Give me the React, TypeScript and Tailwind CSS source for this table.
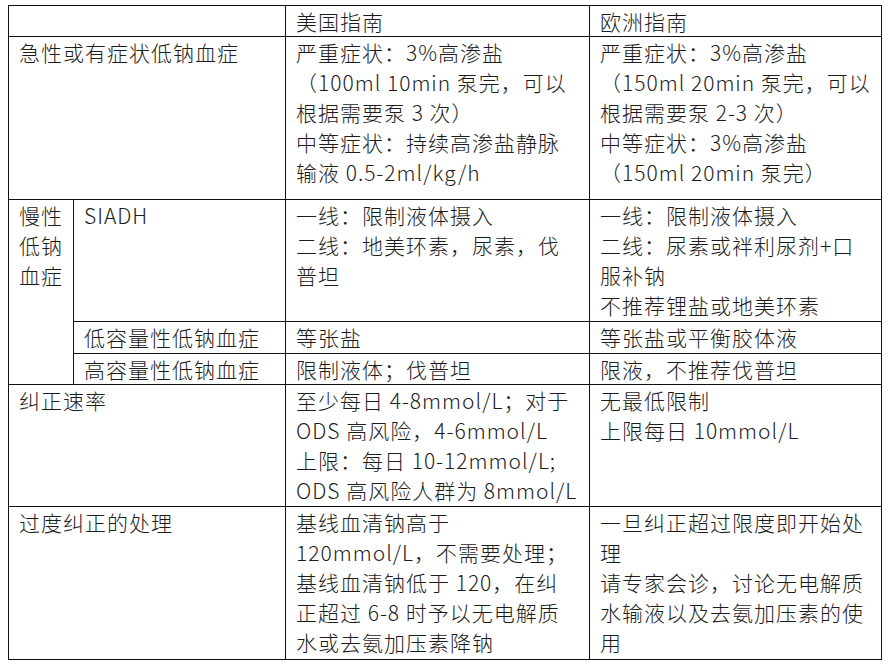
import React from "react";

type Cell = string[];

const Lines = ({ lines }: { lines: Cell }) => (
  <>
    {lines.map((l, i) => (
      <div key={i} className="whitespace-nowrap">
        {l}
      </div>
    ))}
  </>
);

const td = "border border-[#111] align-top pl-[10px] pr-1 pt-0 pb-0";

const App = () => {
  return (
    <div
      className="w-[890px] h-[669px] bg-white text-[#1c1c1c] text-[21px] font-light tracking-[1px] leading-[30px] pt-[5px] pl-[8px]"
      style={{ fontFamily: '"Noto Sans CJK SC", "Noto Sans", sans-serif' }}
    >
      <table className="border-collapse table-fixed w-[873px]">
        <colgroup>
          <col className="w-[65px]" />
          <col className="w-[212px]" />
          <col className="w-[304px]" />
          <col className="w-[292px]" />
        </colgroup>
        <tbody>
          <tr className="h-[31px]">
            <td className={td} colSpan={2}></td>
            <td className={td}>美国指南</td>
            <td className={td}>欧洲指南</td>
          </tr>
          <tr className="h-[163px]">
            <td className={td} colSpan={2}>
              急性或有症状低钠血症
            </td>
            <td className={td}>
              <Lines
                lines={[
                  "严重症状：3%高渗盐",
                  "（100ml 10min 泵完，可以",
                  "根据需要泵 3 次）",
                  "中等症状：持续高渗盐静脉",
                  "输液 0.5-2ml/kg/h",
                ]}
              />
            </td>
            <td className={td}>
              <Lines
                lines={[
                  "严重症状：3%高渗盐",
                  "（150ml 20min 泵完，可以",
                  "根据需要泵 2-3 次）",
                  "中等症状：3%高渗盐",
                  "（150ml 20min 泵完）",
                ]}
              />
            </td>
          </tr>
          <tr className="h-[122px]">
            <td className={td} rowSpan={3}>
              <Lines lines={["慢性", "低钠", "血症"]} />
            </td>
            <td className={td}>SIADH</td>
            <td className={td}>
              <Lines lines={["一线：限制液体摄入", "二线：地美环素，尿素，伐", "普坦"]} />
            </td>
            <td className={td}>
              <Lines
                lines={["一线：限制液体摄入", "二线：尿素或袢利尿剂+口", "服补钠", "不推荐锂盐或地美环素"]}
              />
            </td>
          </tr>
          <tr className="h-[32px]">
            <td className={td}>低容量性低钠血症</td>
            <td className={td}>等张盐</td>
            <td className={td}>等张盐或平衡胶体液</td>
          </tr>
          <tr className="h-[31px]">
            <td className={td}>高容量性低钠血症</td>
            <td className={td}>限制液体；伐普坦</td>
            <td className={td}>限液，不推荐伐普坦</td>
          </tr>
          <tr className="h-[122px]">
            <td className={td} colSpan={2}>
              纠正速率
            </td>
            <td className={td}>
              <Lines
                lines={[
                  "至少每日 4-8mmol/L；对于",
                  "ODS 高风险，4-6mmol/L",
                  "上限：每日 10-12mmol/L;",
                  "ODS 高风险人群为 8mmol/L",
                ]}
              />
            </td>
            <td className={td}>
              <Lines lines={["无最低限制", "上限每日 10mmol/L"]} />
            </td>
          </tr>
          <tr className="h-[153px]">
            <td className={td} colSpan={2}>
              过度纠正的处理
            </td>
            <td className={td}>
              <Lines
                lines={[
                  "基线血清钠高于",
                  "120mmol/L，不需要处理；",
                  "基线血清钠低于 120，在纠",
                  "正超过 6-8 时予以无电解质",
                  "水或去氨加压素降钠",
                ]}
              />
            </td>
            <td className={td}>
              <Lines
                lines={[
                  "一旦纠正超过限度即开始处",
                  "理",
                  "请专家会诊，讨论无电解质",
                  "水输液以及去氨加压素的使",
                  "用",
                ]}
              />
            </td>
          </tr>
        </tbody>
      </table>
    </div>
  );
};

export default App;
